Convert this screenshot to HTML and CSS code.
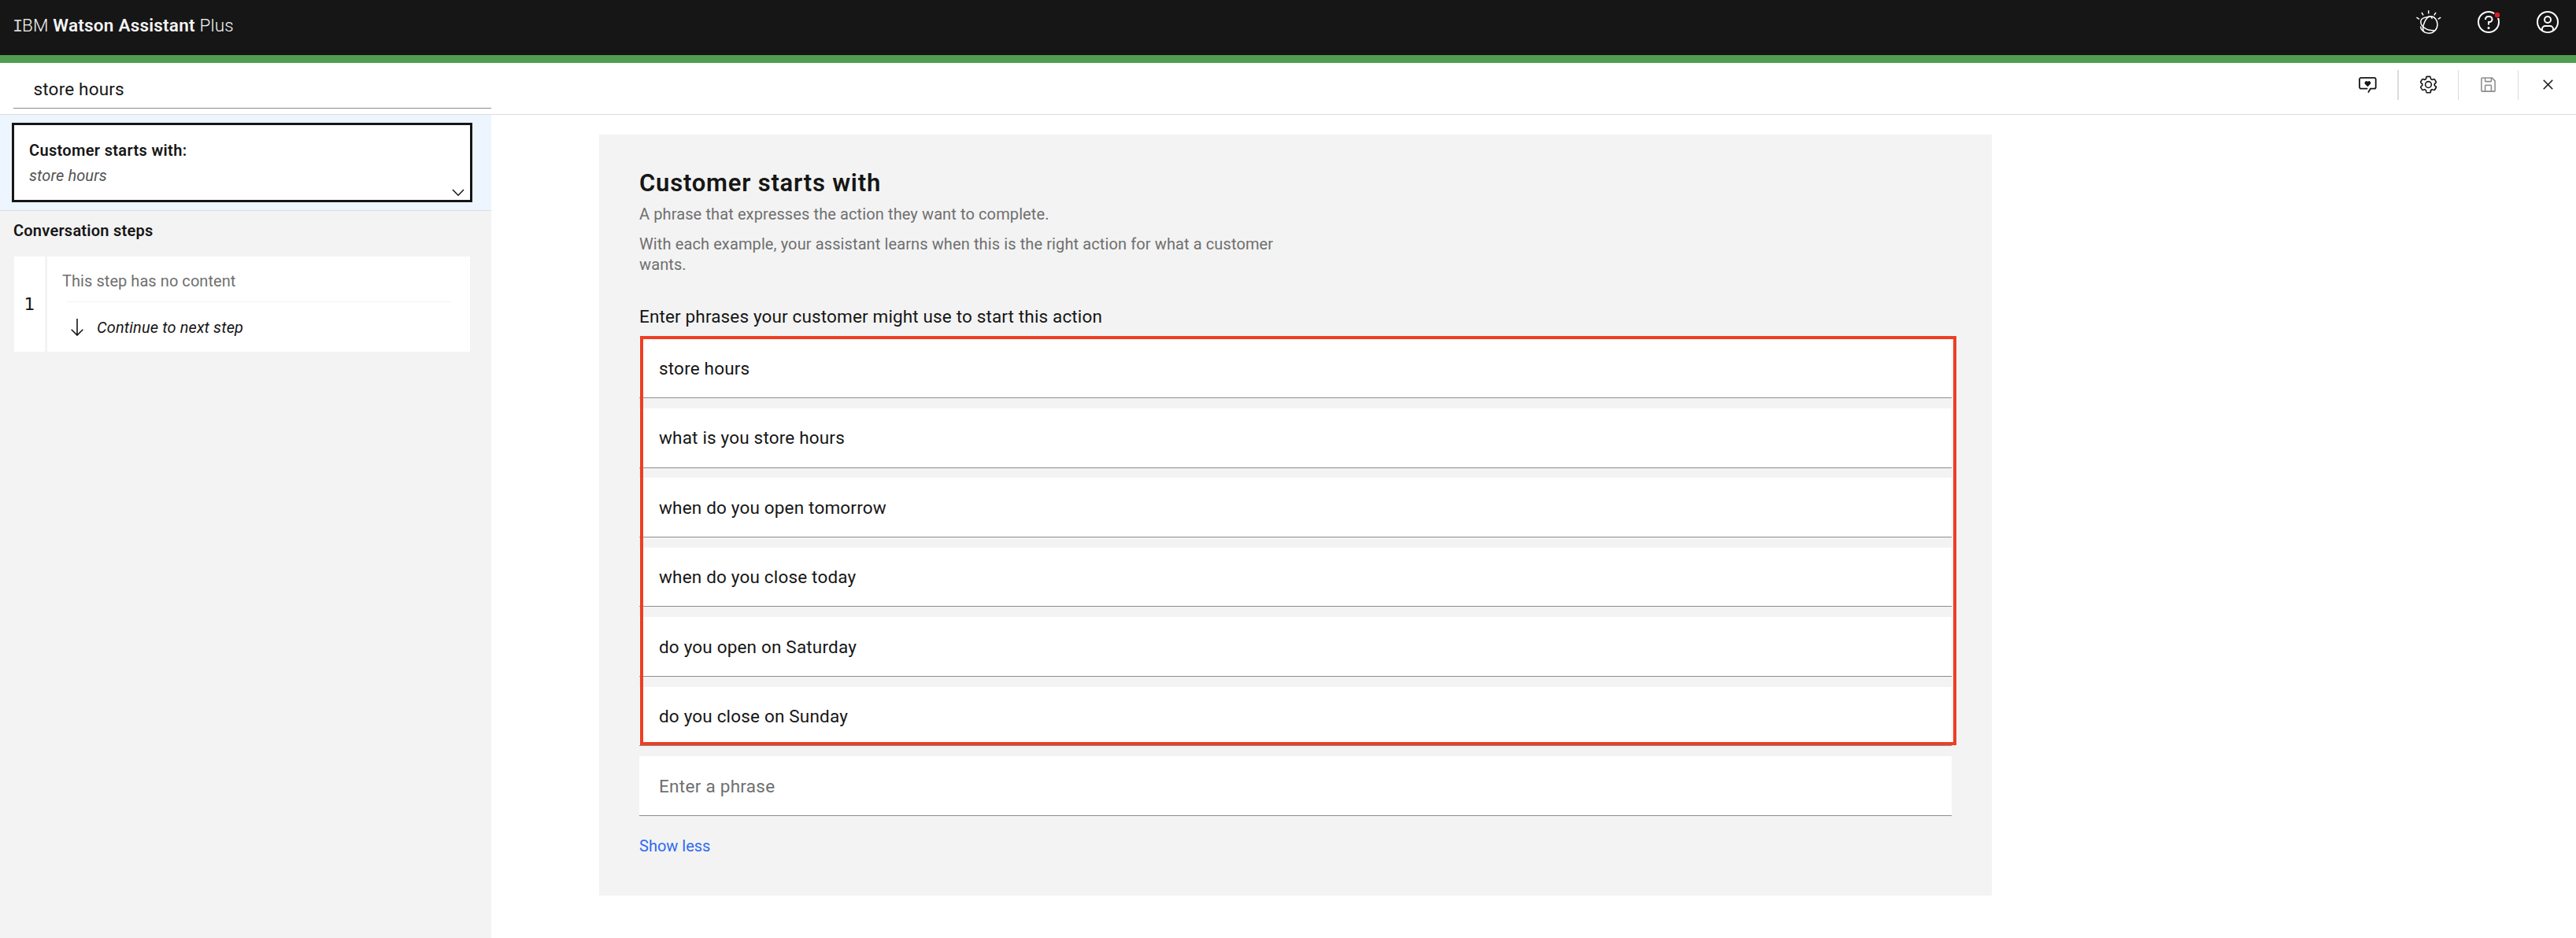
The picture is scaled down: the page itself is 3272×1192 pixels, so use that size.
FILE: index.html
```html
<!DOCTYPE html>
<html lang="en">
<head>
<meta charset="utf-8">
<title>IBM Watson Assistant Plus</title>
<link rel="stylesheet" href="styles.css">
</head>
<body>
<header class="header">
  <div class="brand"><span class="serif-i">I</span>BM <b>Watson Assistant</b> Plus</div>
  <div class="header-icons">
    <svg class="hicon watson" viewBox="0 0 32 32"><path d="M15.7 1.2v4.2M7 3.8l2 3.6M25 3.8l-2.200 3.600M.4 10.200l3.600 2.100M31.200 10.200l-3.500 2.100"/><path d="M9.500 26.800C6.800 23 12 8.800 18.500 8.800 23 8.800 27 13.500 27 19a11 11 0 0 1-11 11.200C9 30 5.600 25 5.600 21.500"/><path d="M15.500 9.500C12 10 5.800 10.500 5.800 15.500 5.800 21 12 27.500 24 26.800"/><path d="M15 9.200C19 8.400 20.500 10.500 20 12"/></svg>
    <svg class="hicon help" viewBox="0 0 32 32"><circle cx="16" cy="16" r="13" fill="none" stroke="#fff" stroke-width="2"/><path fill="#fff" d="M17 8h-1.500A4.490 4.490 0 0 0 11 12.500v.5h2v-.5a2.500 2.500 0 0 1 2.500-2.500H17a2.500 2.500 0 0 1 0 5h-2v4.500h2V17a4.500 4.500 0 0 0 0-9z"/><circle cx="16" cy="23.500" r="1.500" fill="#fff"/><circle cx="27" cy="7" r="4.200" fill="#161616"/><circle cx="27" cy="7" r="3.200" fill="#da1e28"/></svg>
    <svg class="hicon user" viewBox="0 0 32 32" fill="#fff"><path d="M16 8a5 5 0 1 0 5 5 5 5 0 0 0-5-5zm0 8a3 3 0 1 1 3-3 3 3 0 0 1-3 3z"/><path d="M16 2a14 14 0 1 0 14 14A14 14 0 0 0 16 2zM10 26.380V25a3 3 0 0 1 3-3h6a3 3 0 0 1 3 3v1.380a11.900 11.900 0 0 1-12 0zm13.990-1.450A5 5 0 0 0 19 20h-6a5 5 0 0 0-4.990 4.930 12 12 0 1 1 15.980 0z"/></svg>
  </div>
</header>
<div class="titlebar">
  <div class="title-input">store hours</div>
  <div class="toolbar">
    <button class="tool chat" aria-label="Preview"><svg viewBox="0 0 25 25"><path d="M12.300 17.700H4a2 2 0 0 1-2-2V5.800a2 2 0 0 1 2-2h16.700a2 2 0 0 1 2 2v9.900a2 2 0 0 1-2 2h-4.800L13 22.600" fill="none" stroke="#161616" stroke-width="1.800"/><path fill="#161616" d="M12.400 15.200 9.200 12a2.200 2.200 0 0 1 3.200-3.300A2.200 2.200 0 0 1 15.600 12z"/></svg></button>
    <button class="tool" aria-label="Settings"><svg viewBox="0 0 16 16"><path d="M13.500 8.400V7.600l1-.8c.4-.3.400-.9.200-1.300l-1.200-2C13.300 3.200 13 3 12.600 3l-.3.100-1.200.4c-.2-.1-.4-.3-.7-.4l-.3-1.300C10.100 1.300 9.700 1 9.200 1H6.800c-.5 0-.9.300-1 .8L5.600 3.100c-.3.100-.5.200-.7.300L3.700 3h-.3c-.4 0-.7.200-.9.500l-1.200 2c-.2.400-.1.900.3 1.300l.9.900v.8l-.9.700c-.4.300-.5.900-.2 1.300l1.200 2c.1.300.4.500.8.500l.3-.1 1.200-.4c.2.100.4.300.7.400l.3 1.300c.1.500.5.800 1 .8h2.400c.5 0 .9-.3 1-.8l.3-1.300c.2-.1.400-.2.700-.4l1.200.4.300.1c.4 0 .7-.2.900-.5l1.100-2c.2-.4.200-.9-.2-1.300zM12.600 12l-1.700-.6c-.4.300-.9.600-1.400.8L9.200 14H6.800l-.4-1.800c-.5-.2-.9-.5-1.400-.8L3.400 12l-1.200-2 1.400-1.200c-.1-.5-.1-1.100 0-1.600L2.200 6l1.200-2 1.700.6c.4-.4.900-.6 1.400-.8L6.800 2h2.400l.4 1.800c.5.200.9.500 1.400.8L12.600 4l1.200 2-1.400 1.200c.1.500.1 1.100 0 1.600l1.400 1.200z" fill="#161616"/><circle cx="8" cy="8" r="2.500" fill="none" stroke="#161616"/></svg></button>
    <button class="tool save" aria-label="Save"><svg viewBox="0 0 32 32"><path d="M27.710 9.290l-5-5A1 1 0 0 0 22 4H6a2 2 0 0 0-2 2v20a2 2 0 0 0 2 2h20a2 2 0 0 0 2-2V10a1 1 0 0 0-.29-.71zM12 6h8v4h-8zm8 20h-8v-8h8zm2 0v-8a2 2 0 0 0-2-2h-8a2 2 0 0 0-2 2v8H6V6h4v4a2 2 0 0 0 2 2h8a2 2 0 0 0 2-2V6.410l4 4V26z" fill="#8d8d8d"/></svg></button>
    <button class="tool close" aria-label="Close"><svg viewBox="0 0 32 32"><path d="M24 9.400 22.600 8 16 14.600 9.400 8 8 9.400l6.600 6.600L8 22.600 9.400 24l6.600-6.600 6.600 6.600 1.400-1.400-6.600-6.600z" fill="#161616"/></svg></button>
  </div>
</div>
<div class="body">
  <aside class="sidebar">
    <section class="start">
      <div class="start-card">
        <div class="start-title">Customer starts with:</div>
        <div class="start-sub">store hours</div>
        <svg class="chevron" viewBox="0 0 16 10"><path d="M1 1l7 7.200L15 1" fill="none" stroke="#161616" stroke-width="1.500"/></svg>
      </div>
    </section>
    <h2 class="steps-title">Conversation steps</h2>
    <div class="step">
      <div class="step-num">1</div>
      <div class="step-body">
        <div class="step-empty">This step has no content</div>
        <div class="step-next">
          <svg class="arrow" viewBox="0 0 16 22"><path d="M8 0v21M.7 13.800 8 21l7.300-7.200" fill="none" stroke="#161616" stroke-width="1.600"/></svg>
          <span>Continue to next step</span>
        </div>
      </div>
    </div>
  </aside>
  <main class="main">
    <section class="panel">
      <h1 class="panel-title">Customer starts with</h1>
      <p class="desc">A phrase that expresses the action they want to complete.</p>
      <p class="desc desc-more">With each example, your assistant learns when this is the right action for what a customer<br>wants.</p>
      <div class="label">Enter phrases your customer might use to start this action</div>
      <div class="phrases">
        <div class="phrase">store hours</div>
        <div class="phrase">what is you store hours</div>
        <div class="phrase">when do you open tomorrow</div>
        <div class="phrase">when do you close today</div>
        <div class="phrase">do you open on Saturday</div>
        <div class="phrase">do you close on Sunday</div>
        <div class="phrase empty">Enter a phrase</div>
        <div class="highlight"></div>
      </div>
      <a class="less">Show less</a>
    </section>
  </main>
</div>
</body>
</html>
```
FILE: styles.css
```css
* { box-sizing: border-box; }
body { margin: 0; background: #fff; color: #161616; font-family: Roboto, "Open Sans", sans-serif; font-size: 22.500px; line-height: 30px; letter-spacing: .18px; white-space: nowrap; }
h1, h2, p { margin: 0; font-weight: 400; }
.header { height: 80px; background: #161616; border-bottom: 10px solid #509e51; display: flex; justify-content: space-between; padding: 12px 20px 0 17px; color: #f4f4f4; }
.brand { padding-top: 5px; font-weight: 300; letter-spacing: .22px; }
.brand b { font-weight: 600; }
.serif-i { font-family: "Liberation Mono", monospace; font-size: 22px; line-height: 1; color: #d4d4d4; margin: 0 -1.500px 0 -1px; }
.header-icons { display: flex; gap: 43.500px; }
.hicon { width: 32px; height: 32px; display: block; }
.watson { fill: none; stroke: #fff; stroke-width: 1.500; }
.titlebar { height: 66px; border-bottom: 1px solid #dcdcdc; display: flex; justify-content: space-between; padding-left: 17px; }
.title-input { width: 607px; height: 58px; border-bottom: 1px solid #8d8d8d; padding: 18px 0 0 25.500px; }
.toolbar { display: flex; margin-top: 9px; height: 38px; }
.tool { width: 76px; border: 0; border-right: 1px solid #dcdcdc; background: none; padding: 0; display: flex; align-items: center; justify-content: center; }
.tool svg { width: 25px; height: 25px; margin-top: -1px; }
.tool.chat { width: 77px; border-right-width: 2px; }
.tool.close { width: 73px; border: 0; padding-left: 2px; }
.body { display: flex; height: 1046px; }
.sidebar { width: 624px; background: #f3f3f3; }
.start { height: 122px; background: #edf5ff; border-bottom: 1px solid #dcdfe4; padding: 10px 24px 0 15px; }
.start-card { position: relative; height: 101px; background: #fff; border: 3px solid #161616; padding: 19px 0 0 19px; font-size: 20px; line-height: 26px; }
.start-title { font-weight: 600; letter-spacing: .34px; margin-bottom: 6px; }
.start-sub { font-style: italic; color: #525252; letter-spacing: .1px; }
.chevron { position: absolute; right: 7px; bottom: 4px; width: 16px; height: 10px; }
.steps-title { font-size: 20px; line-height: 26px; font-weight: 600; letter-spacing: .24px; padding: 12px 0 0 17px; }
.step { display: flex; gap: 3px; margin: 20px 27px 0 18px; height: 121px; }
.step-num { width: 39px; background: #fff; text-align: center; padding-top: 46px; font-family: "DejaVu Sans", sans-serif; font-size: 22px; }
.step-body { flex: 1; background: #fff; font-size: 20px; line-height: 26px; letter-spacing: .06px; padding-left: 20px; }
.step-empty { color: #6f6f6f; padding-top: 18px; height: 57px; margin-left: -1px; }
.step-next { display: flex; align-items: center; gap: 17px; margin: 0 25px 0 5px; border-top: 1px solid #f3f3f3; padding: 19px 0 0 5px; font-style: italic; letter-spacing: .12px; }
.arrow { width: 16px; height: 22px; }
.main { flex: 1; padding: 25px 0 0 137px; }
.panel { width: 1769px; height: 967px; background: #f3f3f3; padding: 41.600px 51px 0; }
.panel-title { font-size: 31px; line-height: 40px; font-weight: 600; letter-spacing: .79px; }
.desc { font-size: 20px; line-height: 26px; color: #6f6f6f; letter-spacing: .11px; margin-top: 6.600px; }
.desc-more { margin-top: 12px; }
.label { margin-top: 38.100px; letter-spacing: .145px; }
.phrases { position: relative; display: flex; flex-direction: column; gap: 12.800px; margin-top: 13.150px; }
.phrase { height: 75.650px; background: #fff; border-bottom: 1px solid #8d8d8d; padding: 22.500px 0 0 25px; }
.empty { color: #6f6f6f; letter-spacing: .28px; }
.highlight { position: absolute; left: 1px; top: -3.450px; width: 1672px; height: 520px; border: 4px solid #ee3e23; }
.less { display: block; margin-top: 25.400px; color: #2f6bf0; font-size: 20px; line-height: 26px; letter-spacing: 0; }
```
